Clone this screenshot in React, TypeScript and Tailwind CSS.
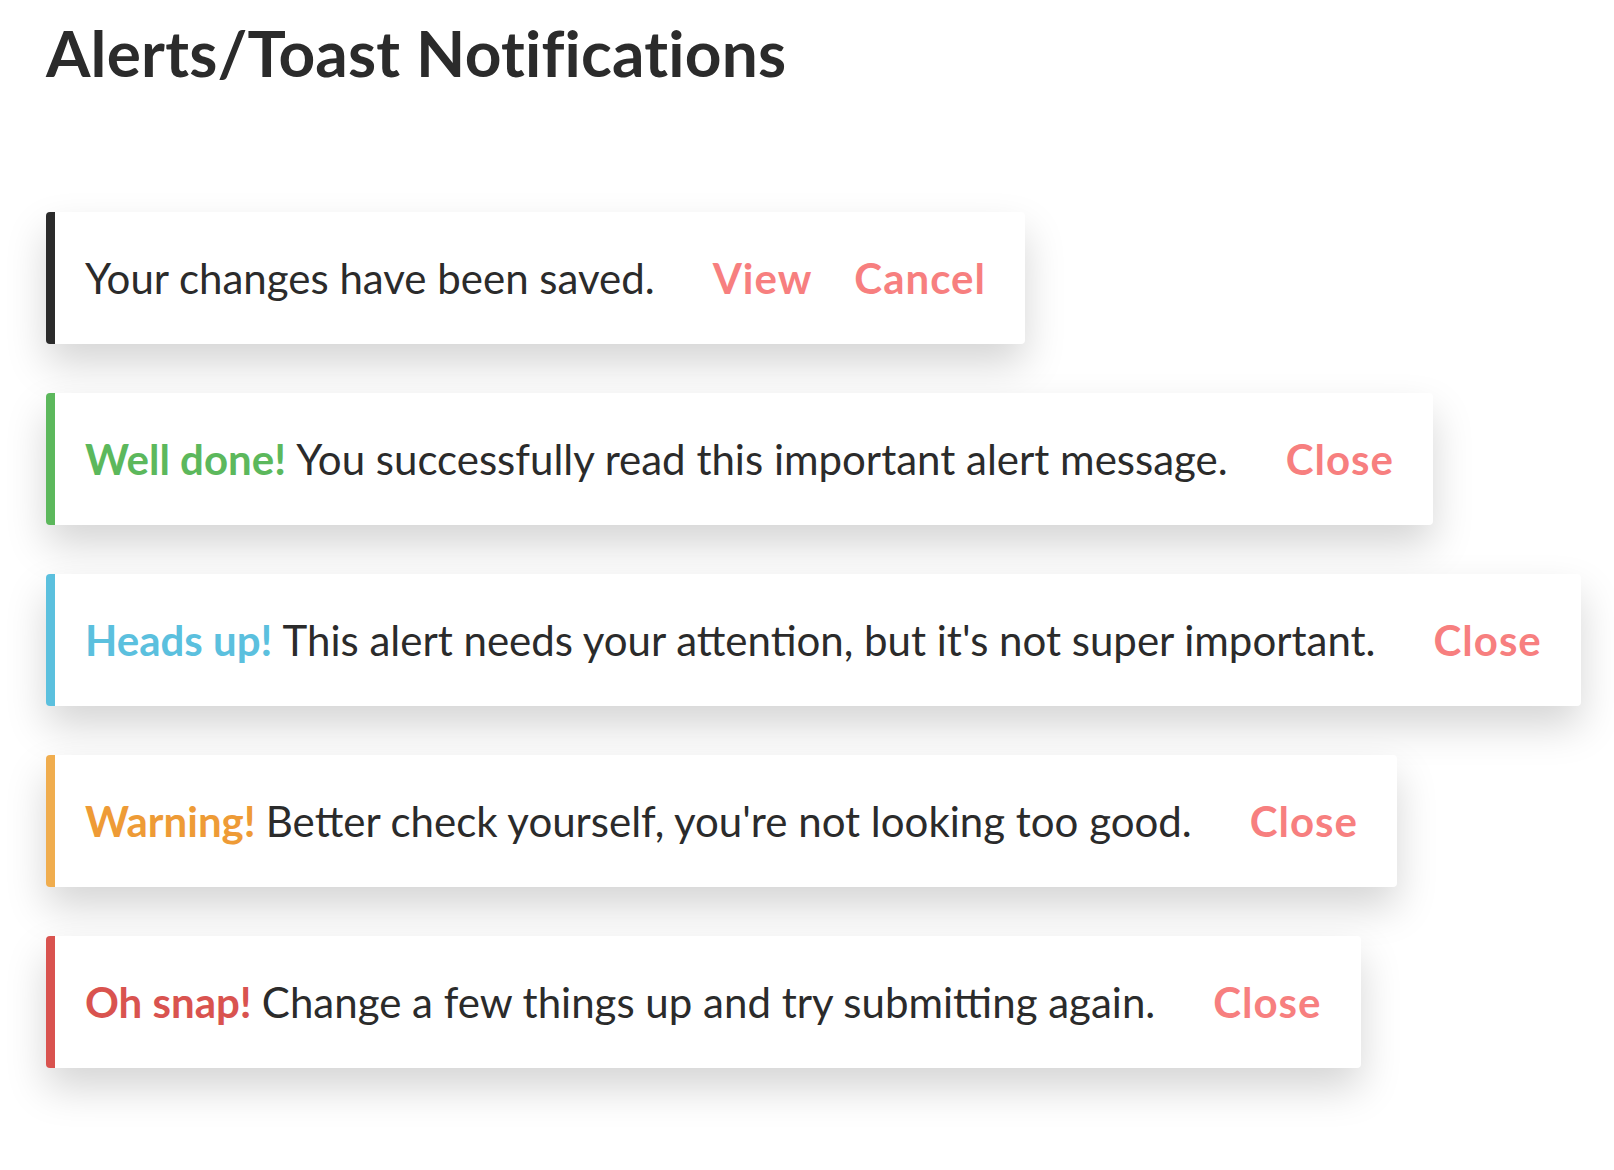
import React from "react";

type Toast = {
  label?: string;
  labelClass?: string;
  borderClass: string;
  message: string;
  actions: string[];
};

const toasts: Toast[] = [
  {
    borderClass: "border-[#2b2b2b]",
    message: "Your changes have been saved.",
    actions: ["View", "Cancel"],
  },
  {
    label: "Well done!",
    labelClass: "text-[#5cb85c]",
    borderClass: "border-[#5cb85c]",
    message: "You successfully read this important alert message.",
    actions: ["Close"],
  },
  {
    label: "Heads up!",
    labelClass: "text-[#5bc0de]",
    borderClass: "border-[#5bc0de]",
    message: "This alert needs your attention, but it's not super important.",
    actions: ["Close"],
  },
  {
    label: "Warning!",
    labelClass: "text-[#ee9b36]",
    borderClass: "border-[#f0ad4e]",
    message: "Better check yourself, you're not looking too good.",
    actions: ["Close"],
  },
  {
    label: "Oh snap!",
    labelClass: "text-[#d9534f]",
    borderClass: "border-[#d9534f]",
    message: "Change a few things up and try submitting again.",
    actions: ["Close"],
  },
];

export default function App() {
  return (
    <div className="min-h-[1170px] bg-white px-[46px] pt-[21px] [font-family:Lato,'Liberation_Sans',sans-serif] text-[#2b2b2b]">
      <h1 className="text-[64px] font-bold leading-none tracking-[0.2px]">
        Alerts/Toast Notifications
      </h1>
      <div className="mt-[127px] flex flex-col items-start gap-[49px]">
        {toasts.map((t, i) => (
          <div
            key={i}
            className={`flex h-[132px] items-center rounded-[4px] border-l-[9px] bg-white pl-[30px] pr-[39px] shadow-[0_20px_40px_rgba(0,0,0,0.17)] ${t.borderClass}`}
          >
            <p className="whitespace-nowrap text-[42px] leading-none">
              {t.label && (
                <span className={`font-bold ${t.labelClass}`}>{t.label} </span>
              )}
              {t.message}
            </p>
            <div className="ml-[58px] flex items-center gap-[42px]">
              {t.actions.map((a) => (
                <button
                  key={a}
                  className="text-[42px] font-bold leading-none tracking-[1px] text-[#f77f7f]"
                >
                  {a}
                </button>
              ))}
            </div>
          </div>
        ))}
      </div>
    </div>
  );
}
